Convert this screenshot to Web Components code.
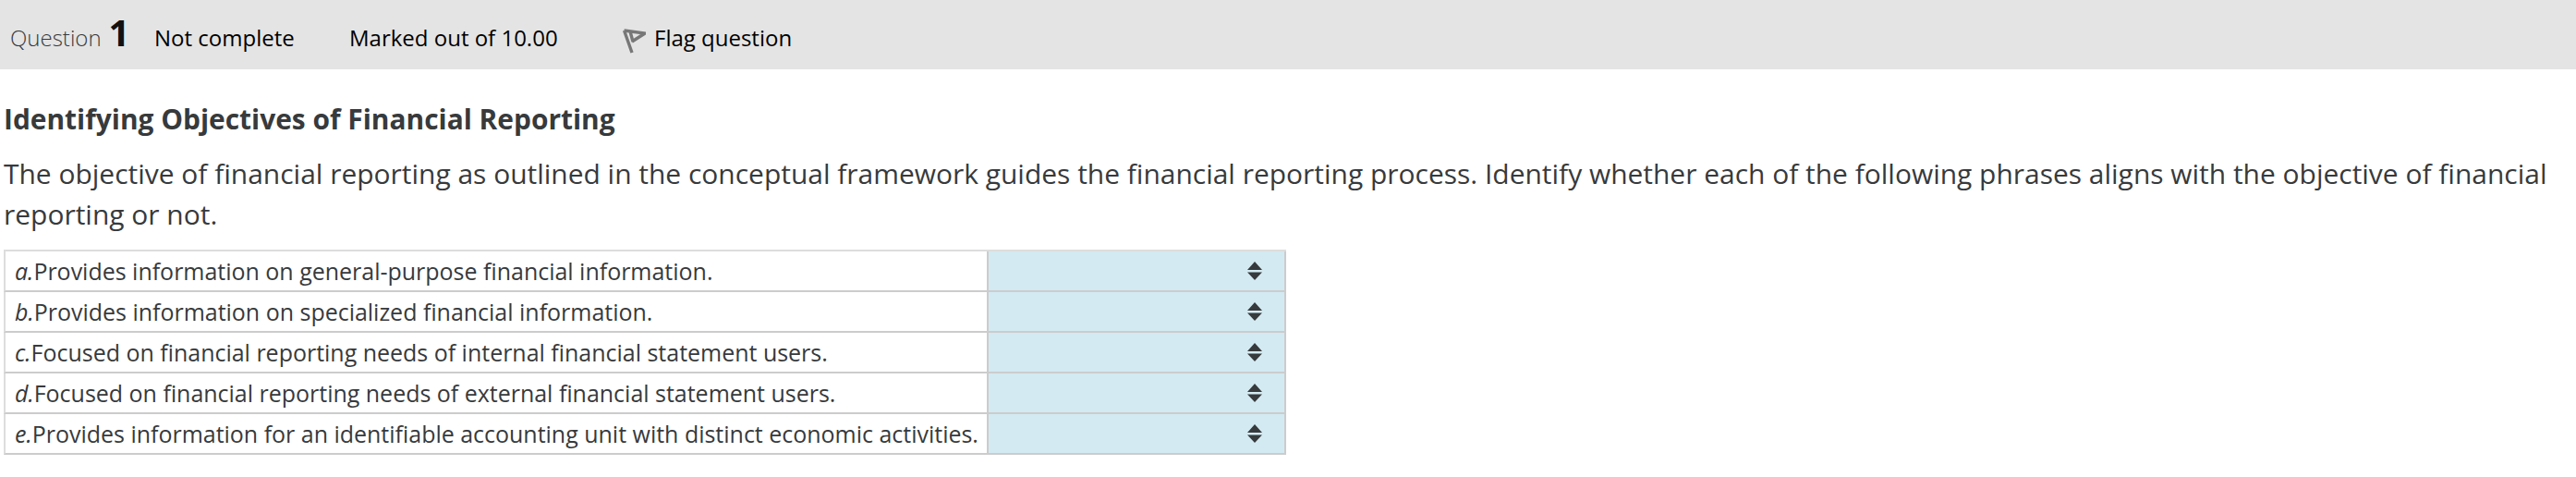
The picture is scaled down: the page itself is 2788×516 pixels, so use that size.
<!DOCTYPE html>
<html><head><meta charset="utf-8"><style>
html,body{margin:0;padding:0;background:#fff}
body{font-family:"Open Sans",sans-serif;color:#373a3c;width:2788px;overflow:hidden}
</style></head><body>
<quiz-header number="1"></quiz-header>
<quiz-body>
<span slot="title">Identifying Objectives of Financial Reporting</span>
<span slot="text">The objective of financial reporting as outlined in the conceptual framework guides the financial reporting process. Identify whether each of the following phrases aligns with the objective of financial reporting or not.</span>
<quiz-row letter="a." text="Provides information on general-purpose financial information."></quiz-row>
<quiz-row letter="b." text="Provides information on specialized financial information."></quiz-row>
<quiz-row letter="c." text="Focused on financial reporting needs of internal financial statement users."></quiz-row>
<quiz-row letter="d." text="Focused on financial reporting needs of external financial statement users."></quiz-row>
<quiz-row letter="e." text="Provides information for an identifiable accounting unit with distinct economic activities." last></quiz-row>
</quiz-body>
<script>
class QuizHeader extends HTMLElement{constructor(){super();const n=this.getAttribute('number');
this.attachShadow({mode:'open'}).innerHTML=`<style>
:host{display:flex;align-items:baseline;height:75px;background:#e4e4e4;color:#000;font-size:24px;padding:15px 0 0 11px;box-sizing:border-box;width:2788px;white-space:nowrap}
.q{font-weight:300;color:#373a3c;display:flex;align-items:baseline;gap:8px;width:156px;font-size:24px}
.n{font-size:40px;font-weight:700;color:#111;line-height:1}
.nc{width:211px}.m{width:296px}
.f{display:flex;align-items:baseline;gap:9px;}
svg{display:block;transform:translateY(8px);filter:blur(.6px)}
</style><span class="q">Question <span class="n">${n}</span></span><span class="nc">Not complete</span><span class="m">Marked out of 10.00</span><span class="f"><svg width="25" height="27" viewBox="0 0 25 27"><path d="M1.5 2L24 5L10 14M1.5 2L10 26M8 3L11 14" fill="none" stroke="#777" stroke-width="3.4"/></svg>Flag question</span>`}}
customElements.define('quiz-header',QuizHeader);
class QuizBody extends HTMLElement{constructor(){super();
this.attachShadow({mode:'open'}).innerHTML=`<style>
:host{display:block;padding:34px 4px 0}
.t{font-size:29.9px;font-weight:700;line-height:40px;color:#373a3c}
.p{font-size:29.96px;line-height:44px;margin:17px 0 16px;width:2780px}
.tb{display:block;width:1388px;border-top:2px solid #ddd}
</style><div class="t"><slot name="title"></slot></div><div class="p"><slot name="text"></slot></div><div class="tb"><slot></slot></div>`}}
customElements.define('quiz-body',QuizBody);
class QuizRow extends HTMLElement{constructor(){super();
this.attachShadow({mode:'open'}).innerHTML=`<style>
:host{display:flex;height:44px;box-sizing:border-box;border-bottom:2px solid #ccc;border-left:2px solid #ddd;border-right:2px solid #ccc;font-size:24.97px;white-space:nowrap}
.l{width:1062px;padding-left:10px;box-sizing:border-box;line-height:42px;flex:none}
.s{flex:1;background:#d3eaf2;border-left:2px solid #ccc;display:flex;align-items:center;justify-content:flex-end;padding-right:24px}
i{font-style:italic}
svg{display:block}
</style><div class="l"><i>${this.getAttribute('letter')}</i>${this.getAttribute('text')}</div><div class="s"><svg width="16" height="20" viewBox="0 0 16 20"><path d="M8 0L16 9H0ZM0 11.5H16L8 20Z" fill="#373a3c"/></svg></div>`}}
customElements.define('quiz-row',QuizRow);
</script>
</body></html>
